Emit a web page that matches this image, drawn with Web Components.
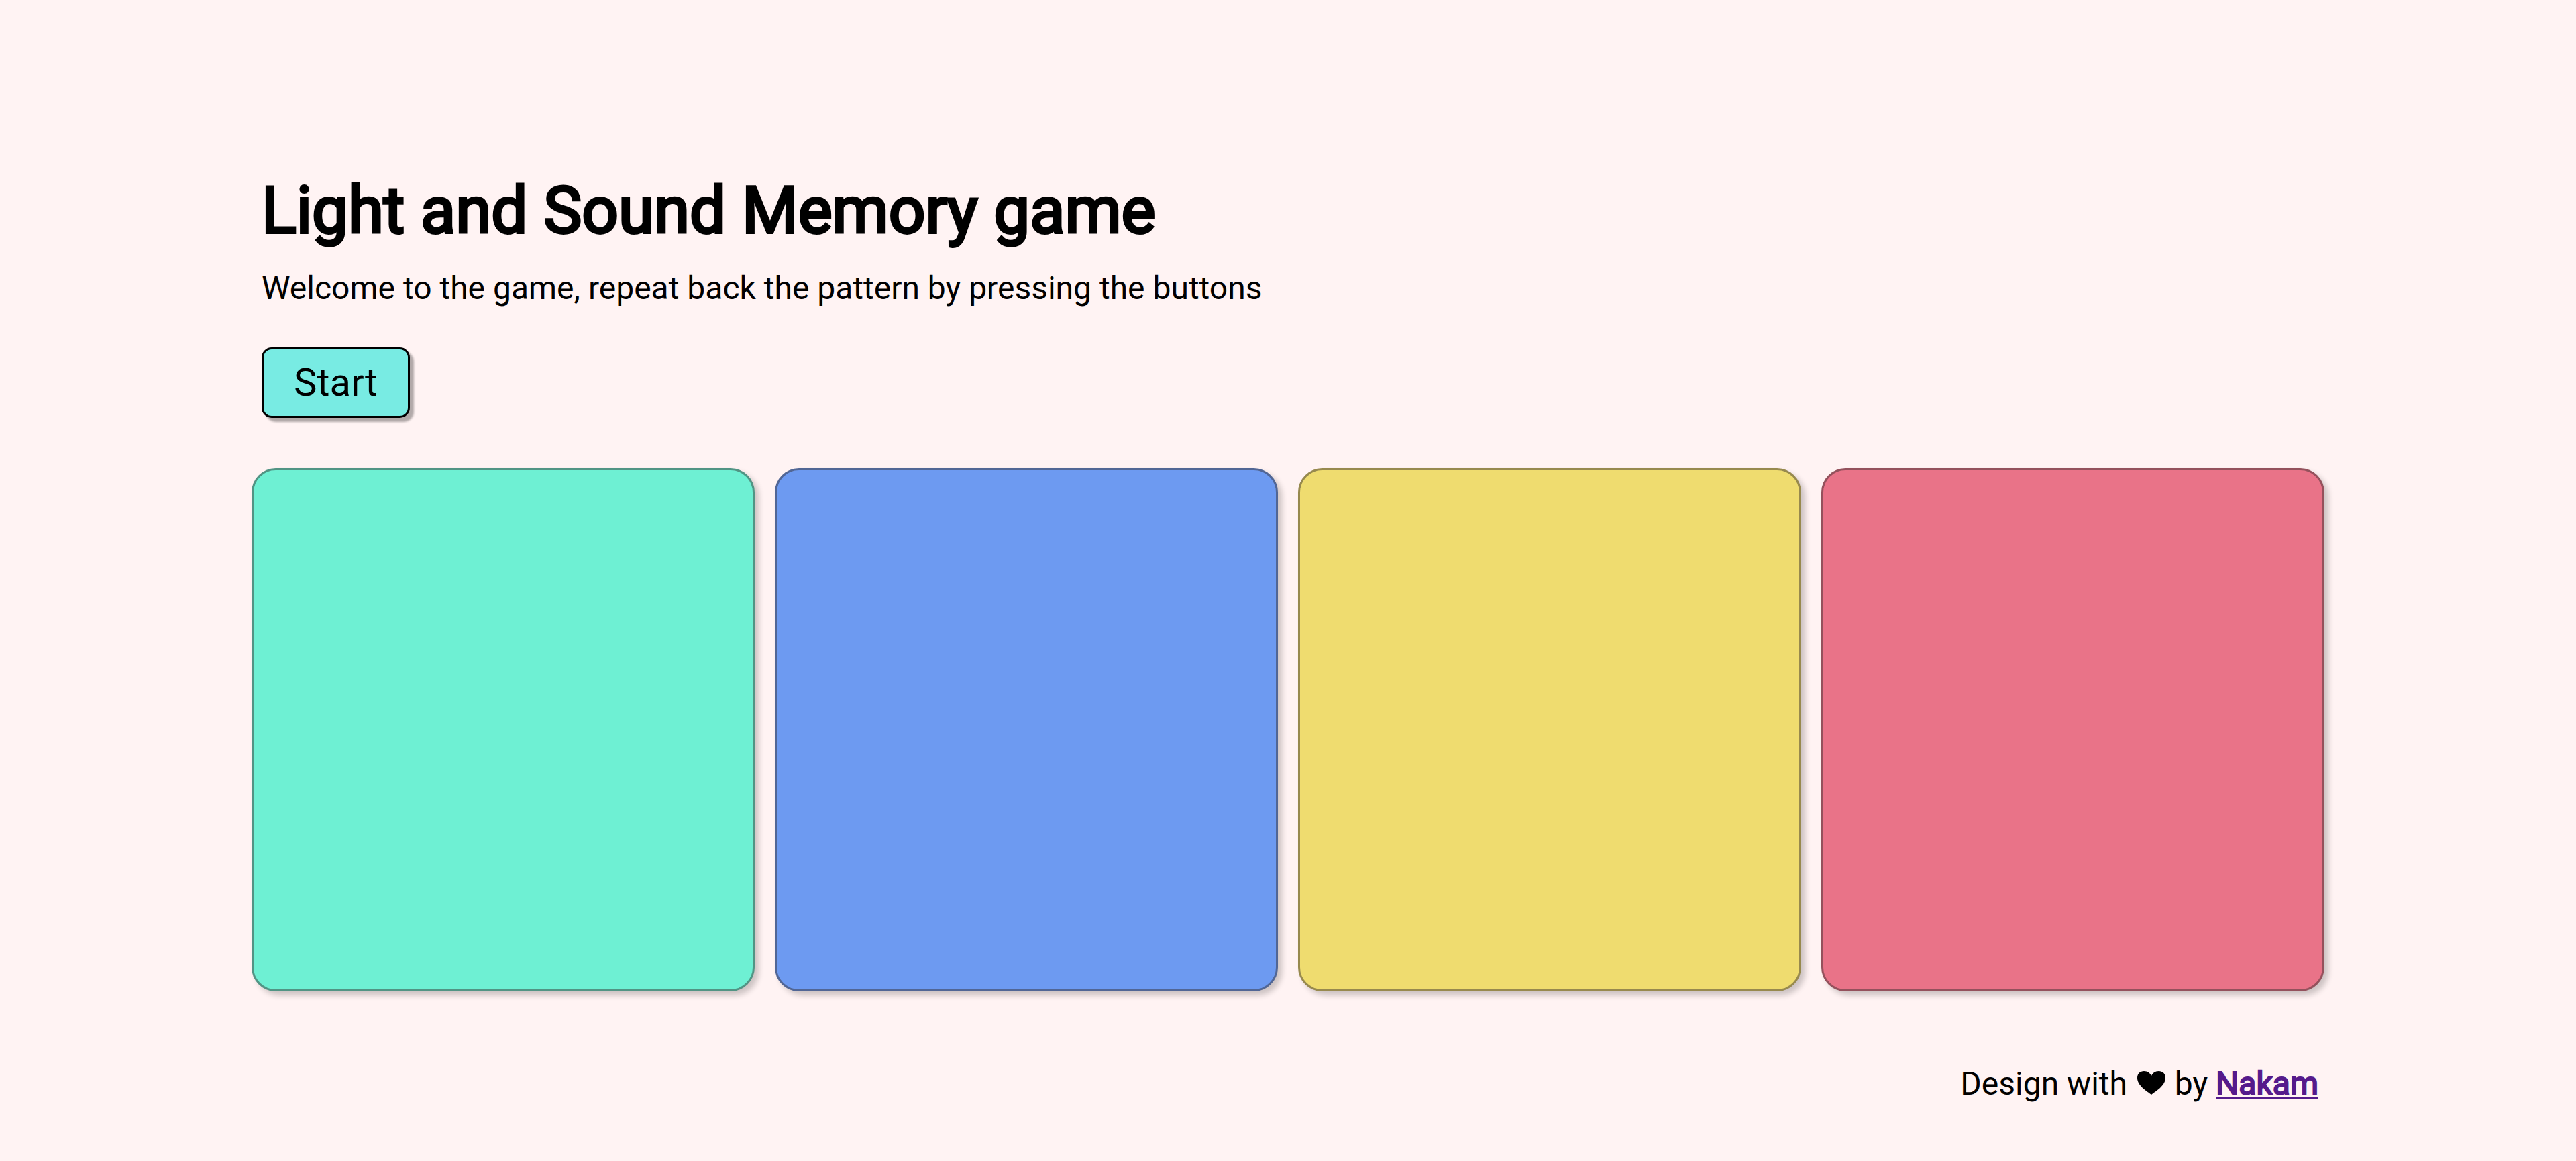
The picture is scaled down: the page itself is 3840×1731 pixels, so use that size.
<!DOCTYPE html>
<html lang="en">
<head>
<meta charset="utf-8">
<title>Light and Sound Memory game</title>
<style>
body { margin: 0; background: #fff3f3; color: #000; font-family: Roboto, "Liberation Sans", sans-serif; font-size: 48px; line-height: 56px; }
</style>
</head>
<body>
<memory-game>
  <game-header slot="header">
    <span slot="title">Light and Sound Memory game</span>
    <span slot="intro">Welcome to the game, repeat back the pattern by pressing the buttons</span>
  </game-header>
  <start-button slot="controls">Start</start-button>
  <game-pad style="--pad: #6ef0d3" label="Green"></game-pad>
  <game-pad style="--pad: #6d9af1" label="Blue"></game-pad>
  <game-pad style="--pad: #efdc6f" label="Yellow"></game-pad>
  <game-pad style="--pad: #e97388" label="Red"></game-pad>
  <game-footer slot="footer" author="Nakam"></game-footer>
</memory-game>
<script>
class BaseElement extends HTMLElement {
  constructor() {
    super();
    this.attachShadow({ mode: 'open' }).innerHTML = this.constructor.markup;
  }
}

class MemoryGame extends BaseElement {
  static markup = `
    <style>
      :host { display: block; padding: 258px 375px 78px; }
      .top { padding: 0 15px; display: flex; flex-direction: column; align-items: flex-start; }
      .pads { display: grid; grid-template-columns: repeat(4, 1fr); gap: 30px; margin: 75px 0 110px; }
      footer { display: flex; justify-content: flex-end; padding-right: 9px; }
    </style>
    <main>
      <div class="top"><slot name="header"></slot><slot name="controls"></slot></div>
      <div class="pads"><slot></slot></div>
    </main>
    <footer><slot name="footer"></slot></footer>`;
}

class GameHeader extends BaseElement {
  static markup = `
    <style>
      :host { display: block; }
      h1 { margin: 0 0 32px; font-size: 96px; line-height: 112px; font-weight: 400; font-kerning: none; -webkit-text-stroke: 4px currentColor; }
      p { margin: 0 0 60px; }
    </style>
    <h1><slot name="title"></slot></h1>
    <p><slot name="intro"></slot></p>`;
}

class StartButton extends BaseElement {
  static markup = `
    <style>
      :host { display: block; }
      button { display: block; padding: 15px 45px; border: 3px solid #000; border-radius: 15px; background: #78ebe3;
        color: #000; font: inherit; font-size: 58px; line-height: 69px; box-shadow: 6px 6px 3px rgba(0, 0, 0, .3); cursor: pointer; }
    </style>
    <button type="button"><slot></slot></button>`;
}

class GamePad extends BaseElement {
  static markup = `
    <style>
      :host { display: block; }
      button { display: block; box-sizing: border-box; width: 100%; height: 780px; padding: 0; border-radius: 36px;
        border: 3px solid color-mix(in srgb, var(--pad) 54%, #302828); background: var(--pad);
        box-shadow: 6px 6px 9px rgba(0, 0, 0, .2); cursor: pointer; }
    </style>
    <button type="button"></button>`;
  connectedCallback() {
    this.shadowRoot.querySelector('button').setAttribute('aria-label', this.getAttribute('label'));
  }
}

class GameFooter extends BaseElement {
  static markup = `
    <style>
      :host { display: block; }
      svg { width: 42px; height: 35px; margin: 0 2px 0 3px; vertical-align: baseline; }
      a { color: #551a8b; -webkit-text-stroke: 2px currentColor; text-decoration: underline; }
    </style>
    Design with <svg viewBox="0 0 42 35" aria-hidden="true"><path d="M21 35C15 30 0 22 0 10C0 3.500 4.500 0 10 0C15.500 0 19 3 21 7C23 3 26.500 0 32 0C37.500 0 42 3.500 42 10C42 22 27 30 21 35Z"/></svg> by <a href="#"></a>`;
  connectedCallback() {
    this.shadowRoot.querySelector('a').textContent = this.getAttribute('author');
  }
}

customElements.define('memory-game', MemoryGame);
customElements.define('game-header', GameHeader);
customElements.define('start-button', StartButton);
customElements.define('game-pad', GamePad);
customElements.define('game-footer', GameFooter);
</script>
</body>
</html>
